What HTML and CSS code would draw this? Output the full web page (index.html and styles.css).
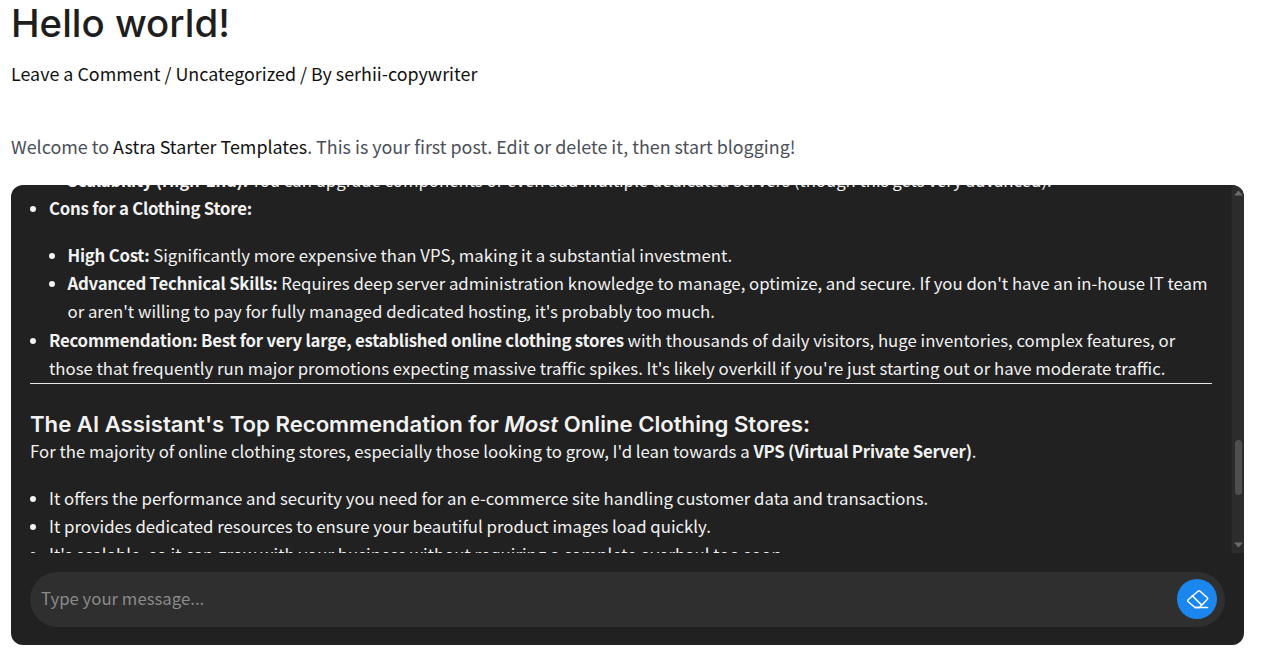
FILE: index.html
```html
<!DOCTYPE html>
<html lang="en">
<head>
<meta charset="utf-8">
<title>Hello world!</title>
<link rel="stylesheet" href="styles.css">
</head>
<body>
<article class="post">
  <h1 class="post-title">Hello world!</h1>
  <p class="post-meta">Leave a Comment / Uncategorized / By serhii-copywriter</p>
  <p class="post-intro">Welcome to <a class="post-link">Astra Starter Templates</a>. This is your first post. Edit or delete it, then start blogging!</p>
  <section class="chat">
    <div class="chat-body">
      <div class="messages">
        <div class="messages-inner">
          <ul class="list list-nested list-first">
            <li><strong>Scalability (High-End):</strong> You can upgrade components or even add multiple dedicated servers (though this gets very advanced).</li>
          </ul>
          <ul class="list">
            <li><strong>Cons for a Clothing Store:</strong>
              <ul class="list list-nested list-spaced">
                <li><strong>High Cost:</strong> Significantly more expensive than VPS, making it a substantial investment.</li>
                <li><strong>Advanced Technical Skills:</strong> Requires deep server administration knowledge to manage, optimize, and secure. If you don't have an in-house IT team or aren't willing to pay for fully managed dedicated hosting, it's probably too much.</li>
              </ul>
            </li>
            <li><strong>Recommendation: Best for very large, established online clothing stores</strong> with thousands of daily visitors, huge inventories, complex features, or those that frequently run major promotions expecting massive traffic spikes. It's likely overkill if you're just starting out or have moderate traffic.</li>
          </ul>
          <hr class="rule">
          <h3 class="answer-title">The AI Assistant's Top Recommendation for <em>Most</em> Online Clothing Stores:</h3>
          <p class="answer-text">For the majority of online clothing stores, especially those looking to grow, I'd lean towards a <strong>VPS (Virtual Private Server)</strong>.</p>
          <ul class="list">
            <li>It offers the performance and security you need for an e-commerce site handling customer data and transactions.</li>
            <li>It provides dedicated resources to ensure your beautiful product images load quickly.</li>
            <li>It's scalable, so it can grow with your business without requiring a complete overhaul too soon.</li>
          </ul>
        </div>
      </div>
      <div class="scrollbar">
        <svg class="scroll-arrow" viewBox="0 0 9 6"><path d="M4.5 0.5 9 5.5H0z"/></svg>
        <div class="scroll-track"><div class="scroll-thumb"></div></div>
        <svg class="scroll-arrow" viewBox="0 0 9 6"><path d="M0 0.5H9L4.500 5.500z"/></svg>
      </div>
    </div>
    <div class="composer">
      <span class="composer-placeholder">Type your message...</span>
      <button class="composer-button" type="button" aria-label="Clear">
        <svg viewBox="0 0 24 24" class="eraser" fill="none" stroke="#fff" stroke-width="1.500" stroke-linejoin="round" stroke-linecap="round">
          <path d="M13 4.200a1.500 1.500 0 0 1 2.100 0l7 6.300a1.500 1.500 0 0 1 .1 2.100l-7.700 7.900H10l-6.800-5.700a1.500 1.500 0 0 1-.1-2.100z"/>
          <path d="M7.200 8.700 16.500 17.900"/>
          <path d="M10 20.500H22.500"/>
        </svg>
      </button>
    </div>
  </section>
</article>
</body>
</html>
```
FILE: styles.css
```css
* { box-sizing: border-box; }
html, body { margin: 0; padding: 0; height: 100%; overflow: hidden; background: #fff; }
body { font-family: "Noto Sans CJK JP", "Noto Sans", sans-serif; }
.post { padding: 0 17px 0 11px; height: 655px; overflow: hidden; }
.post-title { margin: 0; font-family: Inter, "Open Sans", sans-serif; font-weight: 500; font-size: 38.4px; line-height: 46px; color: #1e1e1e; }
.post-meta { margin: 12px 0 0; font-size: 17.9px; line-height: 30px; color: #111; }
.post-intro { margin: 43px 0 0; font-size: 17.9px; line-height: 30px; color: #4b4f58; }
.post-link { color: #111; }
.chat { margin-top: 24px; height: 460px; background: #212121; border-radius: 12px; overflow: hidden; display: flex; flex-direction: column; }
.chat-body { display: flex; height: 368px; }
.messages { flex: 1; overflow: hidden; padding: 0 19px 0 19px; color: #f2f2f2; font-size: 16.77px; line-height: 28.16px; }
.messages-inner { margin-top: -19.2px; }
.list { margin: 0; padding: 0 0 0 19px; list-style: disc; }
.list-nested { padding-left: 18.5px; }
.list-first { padding-left: 37.5px; }
.list-spaced { margin-top: 19px; }
.list strong, .answer-text strong { font-weight: 700; letter-spacing: -0.23px; }
.rule { margin: 0.8px 0 27.5px; border: 0; border-top: 1px solid #e6e6e6; }
.answer-title { margin: 0; font-family: Inter, "Open Sans", sans-serif; font-weight: 600; font-size: 22.15px; line-height: 26px; color: #f2f2f2; }
.answer-text { margin: 0 0 18.2px; }
.scrollbar { width: 13px; background: #2c2c2c; display: flex; flex-direction: column; align-items: center; border-left: 1px solid #262626; }
.scroll-arrow { width: 9px; height: 6px; margin: 5px 0; flex: none; fill: #6a6a6a; }
.scroll-track { flex: 1; width: 100%; padding-top: 239px; display: flex; justify-content: center; }
.scroll-thumb { width: 7px; height: 55px; border-radius: 4px; background: #4f4f4f; }
.composer { margin: 19px 19px 0; height: 55px; border-radius: 28px; background: #2f2f2f; display: flex; align-items: center; justify-content: space-between; padding: 0 8px 0 11px; }
.composer-placeholder { font-size: 16.77px; color: #8a8a8a; padding-bottom: 3px; }
.composer-button { width: 40px; height: 40px; margin-bottom: 1px; padding: 0; border: 0; border-radius: 50%; background: #1a86ee; display: flex; align-items: center; justify-content: center; }
.eraser { width: 24px; height: 24px; }
```
